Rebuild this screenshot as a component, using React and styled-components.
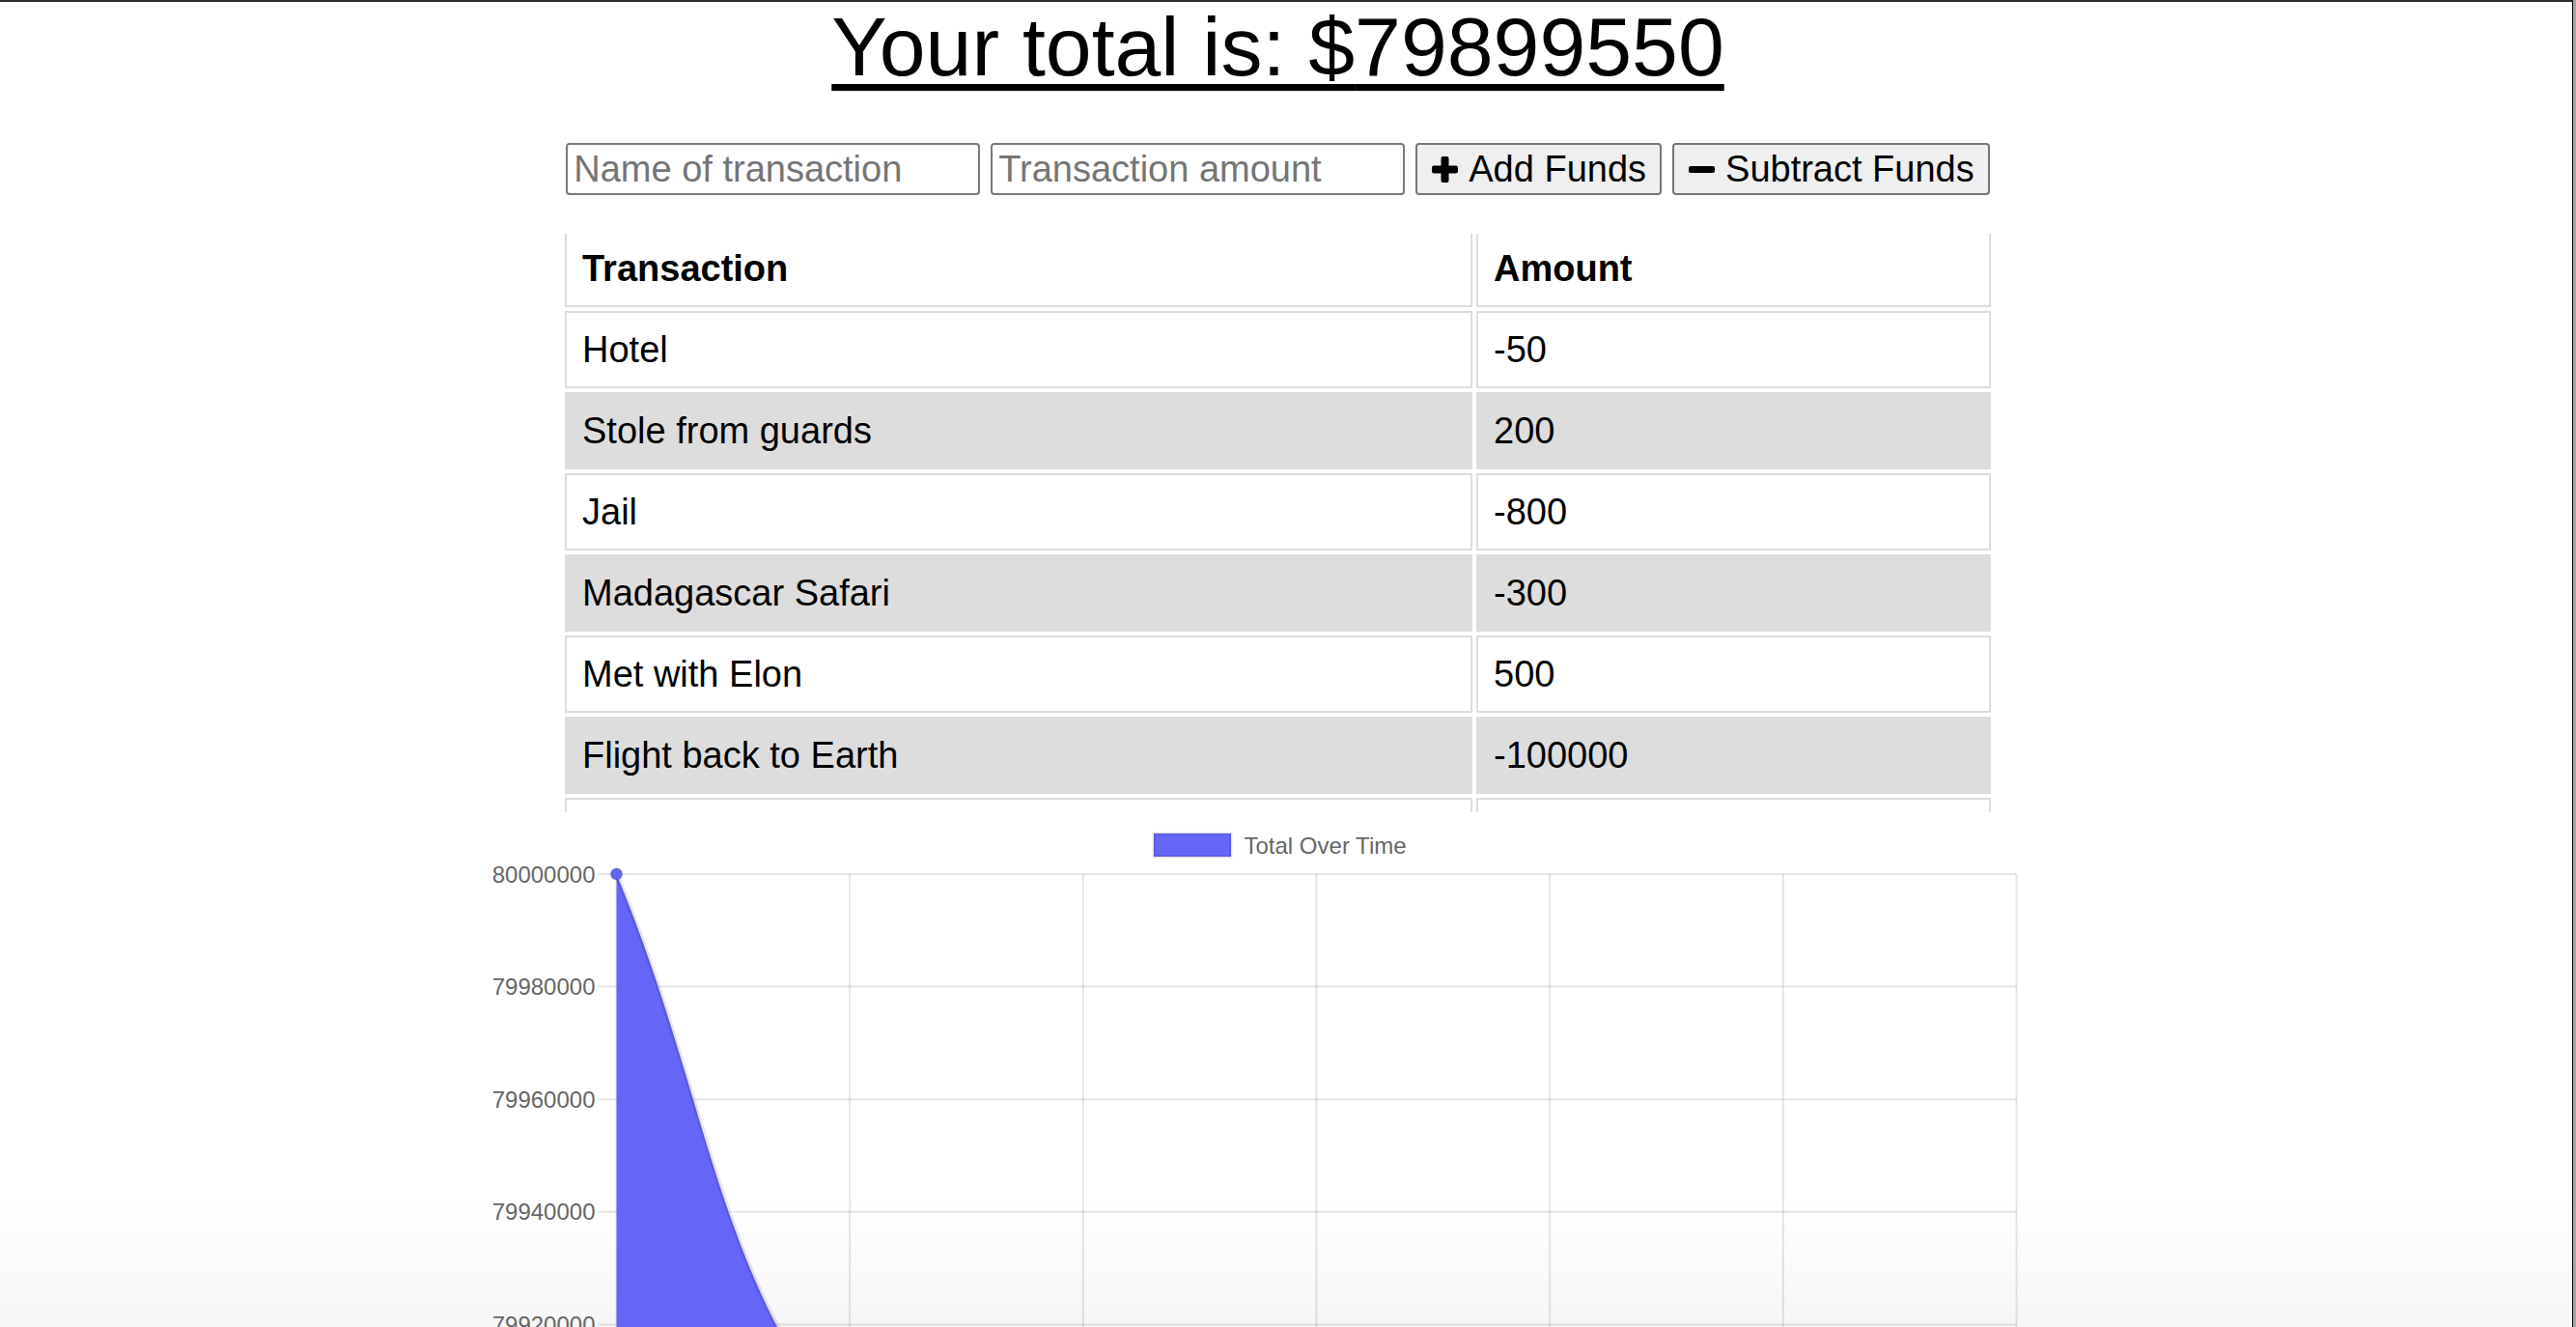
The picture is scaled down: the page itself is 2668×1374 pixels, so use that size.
import React, { useLayoutEffect, useRef } from "react";
import styled, { createGlobalStyle } from "styled-components";

const GlobalStyle = createGlobalStyle`
  html, body { margin: 0; padding: 0; height: 100%; overflow: hidden; }
  body { font-family: "Liberation Sans", Arial, sans-serif; background: #a6a6a6; color: #000; }
  #root { height: 100%; }
`;

const Screen = styled.div`
  display: flex;
  height: 1374px;
  padding-right: 3px;
  box-sizing: border-box;
  background: #a6a6a6;
`;

const Window = styled.div`
  flex: 1;
  display: flex;
  border-top: 2px solid #2b2b2b;
  border-right: 1px solid #000;
  background: linear-gradient(180deg, #fff 0, #fff 1240px, #f6f6f6 1372px);
  overflow: hidden;
`;

const Page = styled.main`
  width: 2647px;
  flex: none;
  display: flex;
  flex-direction: column;
  align-items: center;
`;

const Total = styled.h1`
  margin: 0;
  font-size: 86px;
  font-weight: 400;
  line-height: 92px;
  text-decoration: underline;
  text-decoration-thickness: 7px;
  text-underline-offset: 9px;
`;

const Form = styled.form`
  margin-top: 54px;
  display: flex;
  gap: 11px;
`;

const Field = styled.input`
  box-sizing: border-box;
  width: 429px;
  height: 54px;
  margin: 0;
  padding: 0 6px;
  font: 38px "Liberation Sans", Arial, sans-serif;
  color: #000;
  background: #fff;
  border: 2px solid #7a7a7a;
  border-radius: 4px;
  outline: none;
  -moz-appearance: textfield;
  &::placeholder { color: #757575; }
  &::-webkit-inner-spin-button,
  &::-webkit-outer-spin-button { -webkit-appearance: none; margin: 0; }
`;

const ActionButton = styled.button`
  box-sizing: border-box;
  height: 54px;
  margin: 0;
  display: inline-flex;
  align-items: center;
  gap: 10px;
  padding: 0 14px;
  font: 38px "Liberation Sans", Arial, sans-serif;
  color: #000;
  background: #efefef;
  border: 2px solid #767676;
  border-radius: 4px;
`;

const Scroll = styled.div`
  margin-top: 39.6px;
  width: 1485px;
  height: 599px;
  flex: none;
  overflow-y: auto;
  scrollbar-width: none;
  &::-webkit-scrollbar { display: none; }
`;

const Table = styled.table`
  width: 100%;
  border-collapse: separate;
  border-spacing: 4px;
  table-layout: fixed;
  font-size: 38px;
  line-height: 44px;
  text-align: left;
`;

const HeadCell = styled.th`
  box-sizing: border-box;
  width: ${(p) => p.$w || "auto"};
  padding: 16px;
  border: 2px solid #dddddd;
  background: #fff;
  font-weight: 700;
`;

const Row = styled.tr`
  & > td { background: #fff; }
  &:nth-child(even) > td { background: #dddddd; }
`;

const Cell = styled.td`
  padding: 16px;
  border: 2px solid #dddddd;
  font-weight: 400;
`;

const ChartFigure = styled.figure`
  margin: 0;
  width: 1626px;
  height: 540px;
  flex: none;
`;

const ChartSvg = styled.svg`
  display: block;
  font-family: "Liberation Sans", Arial, sans-serif;
`;

const transactions = [
  { name: "Hotel", value: -50 },
  { name: "Stole from guards", value: 200 },
  { name: "Jail", value: -800 },
  { name: "Madagascar Safari", value: -300 },
  { name: "Met with Elon", value: 500 },
  { name: "Flight back to Earth", value: -100000 },
  { name: "Starting funds", value: 80000000 },
];

const PlusIcon = () => (
  <svg width="29" height="29" viewBox="0 0 29 29" aria-hidden="true">
    <rect x="10.5" y="1" width="8" height="27" rx="2" fill="#000" />
    <rect x="1" y="10.5" width="27" height="8" rx="2" fill="#000" />
  </svg>
);

const MinusIcon = () => (
  <svg width="29" height="29" viewBox="0 0 29 29" aria-hidden="true">
    <rect x="1" y="11" width="27" height="7" rx="2" fill="#000" />
  </svg>
);

const FILL = "#6565f8";
const GRID = "rgba(0,0,0,0.1)";
const X0 = 127.5;
const X1 = 1577.5;
const Y0 = 64;
const STEP_Y = 116.6;
const STEP_X = (X1 - X0) / 6;
const yTicks = [80000000, 79980000, 79960000, 79940000, 79920000, 79900000];

const curve = "M127.5 64 C224.3 297.2 229.7 479 369.5 647";

const Chart = () => (
  <ChartFigure>
    <ChartSvg width="1626" height="540" viewBox="0 0 1626 540">
      {yTicks.map((t, i) => (
        <line
          key={t}
          x1={X0 - 19}
          x2={X1}
          y1={Y0 + i * STEP_Y}
          y2={Y0 + i * STEP_Y}
          stroke={GRID}
          strokeWidth="2"
        />
      ))}
      {Array.from({ length: 7 }).map((_, j) => (
        <line
          key={j}
          x1={X0 + j * STEP_X}
          x2={X0 + j * STEP_X}
          y1={Y0}
          y2={700}
          stroke={GRID}
          strokeWidth="2"
        />
      ))}
      <path d={`${curve} L369.5 720 L127.5 720 Z`} fill={FILL} />
      <path d={curve} fill="none" stroke={GRID} strokeWidth="5" />
      <circle cx={X0} cy={Y0} r="6" fill={FILL} stroke={GRID} strokeWidth="2" />
      {yTicks.map((t, i) => (
        <text
          key={t}
          x="105.5"
          y={Y0 + i * STEP_Y}
          textAnchor="end"
          dominantBaseline="central"
          fontSize="24"
          fill="#666"
        >
          {t}
        </text>
      ))}
      <rect x="684" y="22" width="80" height="24" fill={FILL} stroke={GRID} strokeWidth="3" />
      <text x="777.5" y="34" dominantBaseline="central" fontSize="24" fill="#666">
        Total Over Time
      </text>
    </ChartSvg>
  </ChartFigure>
);

export default function App() {
  const scrollRef = useRef(null);
  useLayoutEffect(() => {
    if (scrollRef.current) scrollRef.current.scrollTop = 8;
  }, []);

  return (
    <>
      <GlobalStyle />
      <Screen>
        <Window>
          <Page>
            <Total>
              Your total is: $<span>79899550</span>
            </Total>
            <Form onSubmit={(e) => e.preventDefault()}>
              <Field type="text" placeholder="Name of transaction" />
              <Field type="number" min="0" placeholder="Transaction amount" />
              <ActionButton type="button">
                <PlusIcon />
                Add Funds
              </ActionButton>
              <ActionButton type="button">
                <MinusIcon />
                Subtract Funds
              </ActionButton>
            </Form>
            <Scroll ref={scrollRef}>
              <Table>
                <thead>
                  <tr>
                    <HeadCell $w="940px">Transaction</HeadCell>
                    <HeadCell>Amount</HeadCell>
                  </tr>
                </thead>
                <tbody>
                  {transactions.map((t) => (
                    <Row key={t.name}>
                      <Cell>{t.name}</Cell>
                      <Cell>{t.value}</Cell>
                    </Row>
                  ))}
                </tbody>
              </Table>
            </Scroll>
            <Chart />
          </Page>
        </Window>
      </Screen>
    </>
  );
}
